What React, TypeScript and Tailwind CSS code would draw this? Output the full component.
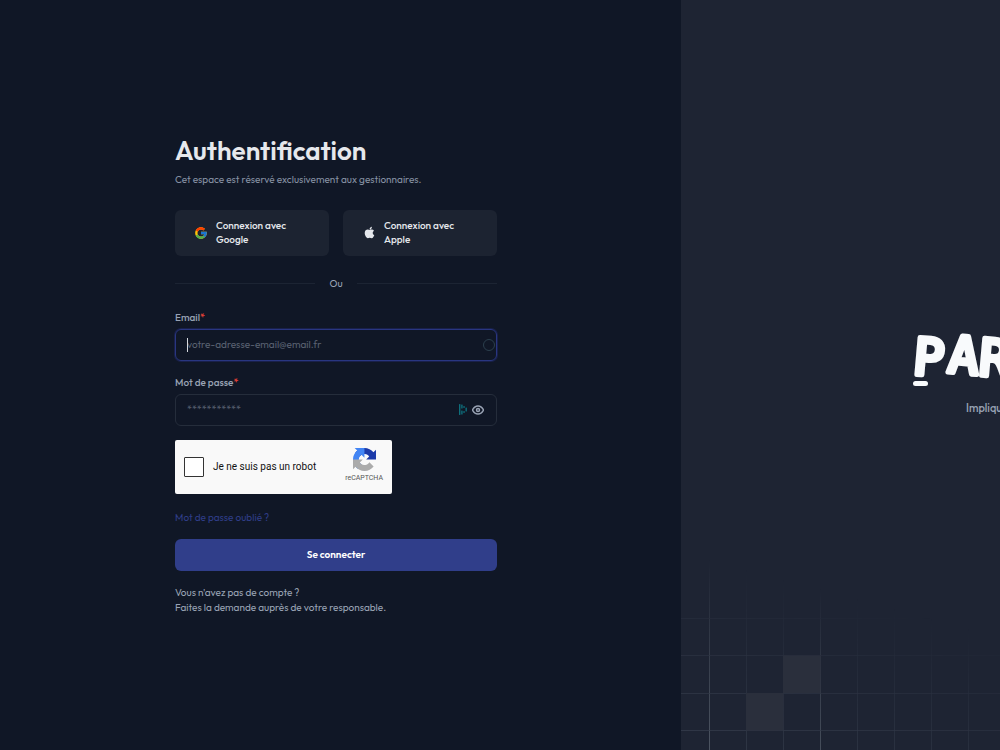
import React from "react";
import { FcGoogle } from "react-icons/fc";
import { FaApple } from "react-icons/fa";
import { FiEye } from "react-icons/fi";

function SocialButton({ icon, name }: { icon: React.ReactNode; name: string }) {
  return (
    <button
      type="button"
      className="flex h-[46px] flex-1 items-center gap-2 rounded-md bg-[#1c2331] pr-5 pl-[19px] text-left text-[10px] leading-[14px] font-medium text-[#e4e7ec]"
    >
      <span className="flex w-[14px] shrink-0 justify-center">{icon}</span>
      <span className="max-w-20">Connexion avec {name}</span>
    </button>
  );
}

function FieldLabel({ htmlFor, children }: { htmlFor: string; children: React.ReactNode }) {
  return (
    <label htmlFor={htmlFor} className="mb-1 block text-[10px] leading-[14px] font-medium text-[#98a2b3]">
      {children}
      <span className="text-[#f04438]">*</span>
    </label>
  );
}

function RecaptchaLogo() {
  return (
    <svg viewBox="0 0 64 64" className="size-[23px]" aria-hidden="true">
      <path
        fill="#1c3aa9"
        d="M64 31.955l-.033-1.37V4.687l-7.16 7.16C50.948 4.674 42.033.093 32.05.093c-10.4 0-19.622 4.96-25.458 12.64l11.736 11.86a15.55 15.55 0 0 1 4.754-5.334c2.05-1.6 4.952-2.906 8.968-2.906.485 0 .86.057 1.135.163 4.976.393 9.288 3.14 11.828 7.124l-8.307 8.307L64 31.953"
      />
      <path
        fill="#4285f4"
        d="M31.862.094l-1.37.033H4.594l7.16 7.16C4.58 13.147 0 22.06 0 32.046c0 10.4 4.96 19.622 12.64 25.458L24.5 45.768a15.55 15.55 0 0 1-5.334-4.754c-1.6-2.05-2.906-4.952-2.906-8.968 0-.485.057-.86.163-1.135.393-4.976 3.14-9.288 7.124-11.828l8.307 8.307L31.86.095"
      />
      <path
        fill="#ababab"
        d="M.001 32.045l.033 1.37v25.898l7.16-7.16c5.86 7.173 14.774 11.754 24.76 11.754 10.4 0 19.622-4.96 25.458-12.64l-11.736-11.86a15.55 15.55 0 0 1-4.754 5.334c-2.05 1.6-4.952 2.906-8.968 2.906-.485 0-.86-.057-1.135-.163-4.976-.393-9.288-3.14-11.828-7.124l8.307-8.307c-10.522.04-22.4.066-27.295-.005"
      />
    </svg>
  );
}

function PasswordManagerIcon() {
  return (
    <svg viewBox="0 0 8 11" className="h-[11px] w-2" fill="#0e6f7c" aria-hidden="true">
      <rect x="0" y="0" width="1.4" height="11" rx=".5" />
      <rect x="2.2" y="0.6" width="1.4" height="4" rx=".5" />
      <rect x="2.2" y="6.6" width="1.4" height="3.8" rx=".5" />
      <rect x="4.4" y="2" width="1.3" height="2" rx=".5" />
      <rect x="4.4" y="7" width="1.3" height="2" rx=".5" />
      <rect x="6.5" y="3.6" width="1.4" height="3.8" rx=".5" />
    </svg>
  );
}

function GridPattern() {
  return (
    <svg
      viewBox="0 0 320 190"
      className="absolute bottom-0 left-0 h-[190px] w-[320px]"
      aria-hidden="true"
    >
      <defs>
        <linearGradient id="fade" gradientUnits="userSpaceOnUse" x1="60" y1="190" x2="105" y2="20">
          <stop offset="0" stopColor="#fff" />
          <stop offset="1" stopColor="#fff" stopOpacity="0" />
        </linearGradient>
        <mask id="rise">
          <rect width="320" height="190" fill="url(#fade)" />
        </mask>
      </defs>
      <g mask="url(#rise)" stroke="#394150" strokeWidth="1">
        <path d="M65.5 0V190M102.5 0V190M176.5 0V190M213.5 0V190M250.5 0V190M287.5 0V190" opacity=".6" />
        <path d="M28.5 0V190M139.5 0V190" stroke="#4b5360" />
        <path d="M0 58.5H320M0 95.5H320M0 133.5H320M0 170.5H320" opacity=".7" />
      </g>
      <path d="M102 95.500h37.500v37.500H102zM65 133h37.500v37.500H65z" fill="#2a2f3c" />
    </svg>
  );
}

function Wordmark() {
  return (
    <svg viewBox="0 0 110 54" className="h-[54px] w-[110px] overflow-visible" fill="#f8fafc">
      <text
        x="-1 34 65"
        y="40 38 41"
        rotate="5"
        fontSize="51"
        stroke="#f8fafc"
        strokeWidth="5"
        strokeLinejoin="round"
        className="font-['DejaVu_Sans_Mono',monospace]"
      >
        PAR
      </text>
      <rect x="0" y="47" width="15" height="5" rx="2.500" />
    </svg>
  );
}

export default function App() {
  return (
    <div className="flex min-h-screen overflow-hidden bg-[#101726] font-[Outfit,Lato,sans-serif]">
      <main className="flex w-[68.1%] shrink-0 items-center justify-center pr-[9px]">
        <form className="w-full max-w-[322px]" onSubmit={(e) => e.preventDefault()}>
          <h1 className="text-[26px] leading-[30px] font-semibold text-[#e6e8ec]">Authentification</h1>
          <p className="mt-[7px] text-[10px] leading-[14px] text-[#8590a2]">
            Cet espace est réservé exclusivement aux gestionnaires.
          </p>

          <div className="mt-[23px] flex gap-[14px]">
            <SocialButton name="Google" icon={<FcGoogle size={14} />} />
            <SocialButton name="Apple" icon={<FaApple size={13} />} />
          </div>

          <div className="mt-[21px] flex items-center gap-[14px] text-[10px] leading-[14px] text-[#98a2b3]">
            <span className="h-px flex-1 bg-[#1c2433]" />
            Ou
            <span className="h-px flex-1 bg-[#1c2433]" />
          </div>

          <div className="mt-5">
            <FieldLabel htmlFor="email">Email</FieldLabel>
            <div className="relative">
              <input
                id="email"
                type="email"
                placeholder="votre-adresse-email@email.fr"
                className="block h-8 w-full rounded-md border border-[#293681] bg-transparent px-[11px] text-[10px] text-[#e4e7ec] shadow-[0_0_0_1px_#19204a] outline-none placeholder:text-[#596171]"
              />
              <span className="absolute top-[9px] left-3 h-[14px] w-px bg-[#d5d8de]" />
              <span className="absolute top-[10px] right-[2px] size-3 rounded-full border border-[#2b3f4d]" />
            </div>
          </div>

          <div className="mt-[15px]">
            <FieldLabel htmlFor="password">Mot de passe</FieldLabel>
            <div className="flex h-8 items-center rounded-md border border-[#252d3b] pr-3 pl-[11px]">
              <input
                id="password"
                type="password"
                placeholder="***********"
                className="min-w-0 flex-1 bg-transparent text-[10px] text-[#e4e7ec] outline-none placeholder:text-[#596171]"
              />
              <PasswordManagerIcon />
              <button type="button" aria-label="Afficher le mot de passe" className="ml-[5px] text-[#98a2b3]">
                <FiEye size={12} strokeWidth={3} />
              </button>
            </div>
          </div>

          <div className="mt-[14px] flex h-[54px] w-[217px] items-center rounded-xs bg-[#f9f9f9] pr-[9px] pl-[9px] font-[Roboto,sans-serif]">
            <input
              id="robot"
              type="checkbox"
              className="size-5 appearance-none rounded-[1px] border border-[#333333] bg-white"
            />
            <label htmlFor="robot" className="ml-[9px] flex-1 text-[10px] text-[#111111]">
              Je ne suis pas un robot
            </label>
            <div className="flex flex-col items-center pb-[2px] text-[7px] leading-[10px] text-[#555555]">
              <RecaptchaLogo />
              <span className="mt-[2px]">reCAPTCHA</span>
            </div>
          </div>

          <a href="#" className="mt-[17px] block text-[10px] leading-[14px] text-[#2f3d86]">
            Mot de passe oublié ?
          </a>

          <button
            type="submit"
            className="mt-[14px] h-8 w-full rounded-md bg-[#303e8a] text-[10px] font-semibold text-white"
          >
            Se connecter
          </button>

          <p className="mt-[14px] text-[10px] leading-[15px] text-[#98a2b3]">
            Vous n'avez pas de compte ?
            <br />
            Faites la demande auprès de votre responsable.
          </p>
        </form>
      </main>

      <aside className="relative flex min-w-0 flex-1 items-center overflow-hidden bg-[#1e2433]">
        <GridPattern />
        <div className="ml-[232px] shrink-0">
          <Wordmark />
          <p className="mt-3 ml-[53px] text-[11px] leading-4 font-medium text-[#98a2b3]">Impliqu</p>
        </div>
      </aside>
    </div>
  );
}
